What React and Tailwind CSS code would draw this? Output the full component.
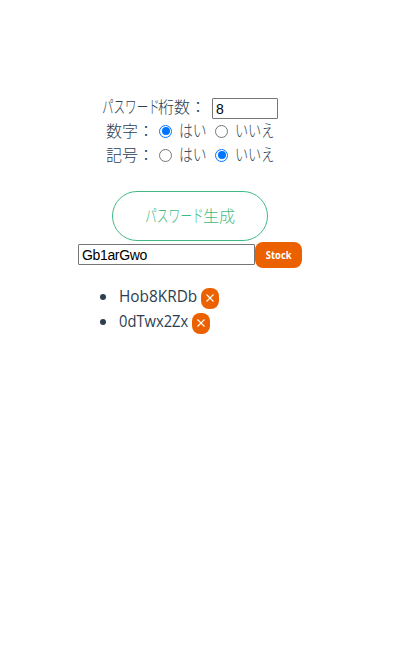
import React from "react";

// Condensed run of text that occupies exactly its box width
function Kana({ children, box, squeeze }) {
  return (
    <span className={`inline-block shrink-0 whitespace-nowrap text-[17.5px] font-light ${box}`}>
      <span className={`inline-block origin-left ${squeeze}`}>{children}</span>
    </span>
  );
}

function Radio({ checked, label, className = "" }) {
  return (
    <span
      role="radio"
      aria-checked={checked}
      aria-label={label}
      className={`flex size-[13px] shrink-0 items-center justify-center rounded-full border bg-white ${
        checked ? "border-[#0075ff]" : "border-[#767676]"
      } ${className}`}
    >
      {checked && <span className="size-[8px] rounded-full bg-[#0075ff]" />}
    </span>
  );
}

function Choice({ label, yes }) {
  return (
    <div className="flex h-6 items-center pl-[106px]">
      <span className="-mt-0.5 w-[53px] shrink-0 whitespace-nowrap">{label}：</span>
      <Radio checked={yes} label="はい" />
      <Kana box="-mt-0.5 ml-[7px] w-[27px]" squeeze="scale-x-[0.79]">はい</Kana>
      <Radio checked={!yes} label="いいえ" className="ml-[9px]" />
      <Kana box="-mt-0.5 ml-[7px] w-[40px]" squeeze="scale-x-[0.75]">いいえ</Kana>
    </div>
  );
}

function StockItem({ text, box, squeeze }) {
  return (
    <li className="flex h-[25px] items-center">
      <span className="mr-[13px] size-[6px] rounded-full bg-[#2c3e50]" />
      <span className={`-mt-0.5 whitespace-nowrap ${box}`}>
        <span className={`inline-block origin-left ${squeeze}`}>{text}</span>
      </span>
      <button aria-label="削除" className="ml-[4px] mt-[3px] flex h-[21px] w-[18px] items-center justify-center rounded-[8px] bg-[#eb6100]">
        <svg width="8" height="8" viewBox="0 0 8 8" fill="none" stroke="white" strokeWidth="1.1">
          <path d="M.5 .5 7.5 7.5M7.5 .5.5 7.5" />
        </svg>
      </button>
    </li>
  );
}

export default function App() {
  return (
    <main className="h-[648px] w-[402px] overflow-hidden bg-white pt-[95px] font-['Open_Sans','Noto_Sans_CJK_JP',sans-serif] text-[16px] leading-6 text-[#2c3e50]">
      <div className="flex h-6 items-center pl-[102px] font-['Noto_Sans_CJK_JP',sans-serif] font-light">
        <Kana box="-mt-0.5 w-[56px]" squeeze="scale-x-[0.66]">パスワード</Kana>
        <span className="-mt-0.5 w-[54px] shrink-0 whitespace-nowrap">桁数：</span>
        <input
          defaultValue="8"
          aria-label="桁数"
          className="mt-[3px] h-[21px] w-[66px] rounded-[1px] border border-[#767676] px-[3px] font-['Liberation_Sans',sans-serif] text-[14px] font-normal text-black"
        />
      </div>
      <div className="font-['Noto_Sans_CJK_JP',sans-serif] font-light">
        <Choice label="数字" yes={true} />
        <Choice label="記号" yes={false} />
      </div>
      <button className="ml-[112px] mt-[24px] flex h-[50px] w-[156px] items-center rounded-full border border-[#42b983] pb-0.5 pl-[32px] font-['Noto_Sans_CJK_JP',sans-serif] font-light text-[#42b983]">
        <Kana box="w-[58px]" squeeze="scale-x-[0.67]">パスワード</Kana>
        <span>生成</span>
      </button>
      <div className="ml-[78px] mt-px flex items-start">
        <input
          defaultValue="Gb1arGwo"
          aria-label="パスワード"
          className="mt-[2px] h-[21px] w-[177px] rounded-[1px] border border-[#767676] px-[3px] font-['Liberation_Sans',sans-serif] text-[14px] tracking-[-0.35px] text-black"
        />
        <button className="h-[26px] w-[47px] rounded-[8px] bg-[#eb6100] text-[10px] font-bold leading-none text-white">
          <span className="inline-block scale-x-[0.94]">Stock</span>
        </button>
      </div>
      <ul className="ml-[100px] mt-[16px]">
        <StockItem text="Hob8KRDb" box="w-[78px]" squeeze="scale-x-[0.96]" />
        <StockItem text="0dTwx2Zx" box="w-[69px]" squeeze="scale-x-[0.92]" />
      </ul>
    </main>
  );
}
